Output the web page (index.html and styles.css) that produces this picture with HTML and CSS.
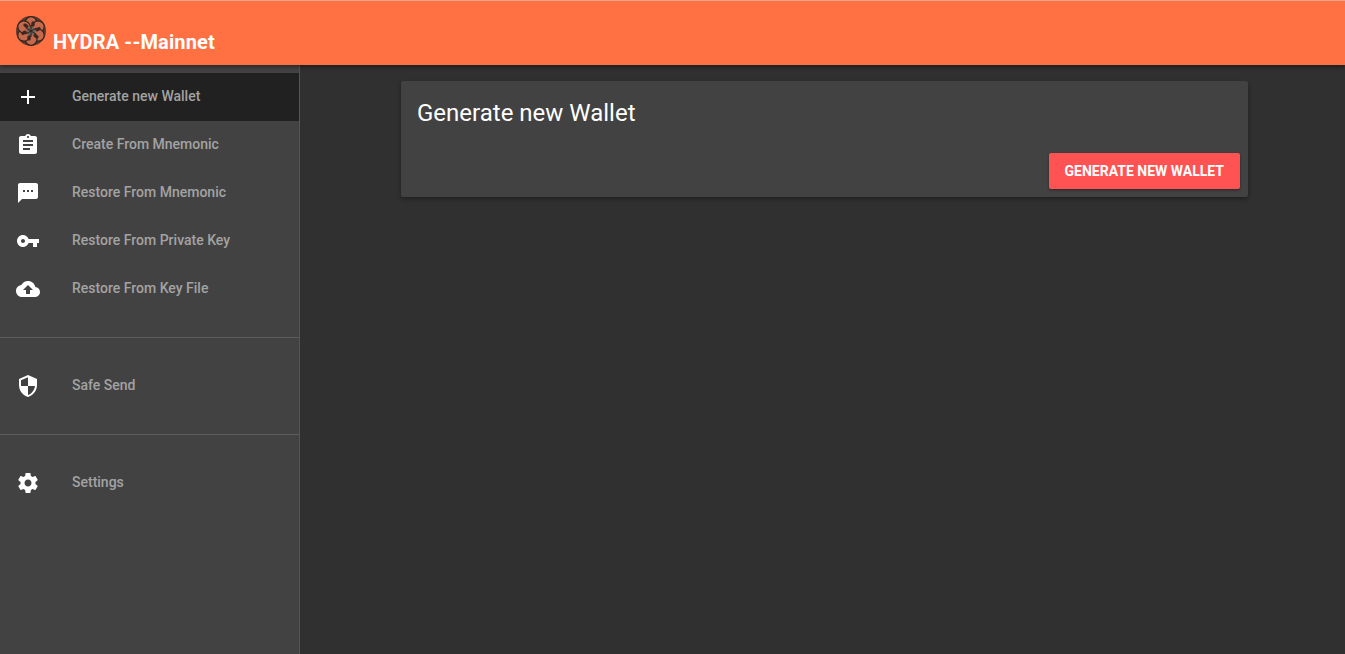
FILE: index.html

```html
<!DOCTYPE html>
<html>
<head>
    <title>HYDRA --Mainnet</title>
    <meta charset="UTF-8">
    <link rel="stylesheet" href="styles.css">
</head>
<body>
    <header class="topbar">
        <svg class="logo" viewBox="0 0 30 30">
            <circle cx="15" cy="15" r="15" fill="#5b3a2e"/>
            <g fill="#c4694c" stroke="#33231e" stroke-width="1.2">
                <ellipse cx="15" cy="7" rx="6" ry="6.4"/>
                <ellipse cx="15" cy="7" rx="6" ry="6.4" transform="rotate(60 15 15)"/>
                <ellipse cx="15" cy="7" rx="6" ry="6.4" transform="rotate(120 15 15)"/>
                <ellipse cx="15" cy="7" rx="6" ry="6.4" transform="rotate(180 15 15)"/>
                <ellipse cx="15" cy="7" rx="6" ry="6.4" transform="rotate(240 15 15)"/>
                <ellipse cx="15" cy="7" rx="6" ry="6.4" transform="rotate(300 15 15)"/>
            </g>
            <g fill="#3d2620">
                <ellipse cx="17" cy="8" rx="1.8" ry="2.8"/>
                <ellipse cx="17" cy="8" rx="1.8" ry="2.8" transform="rotate(60 15 15)"/>
                <ellipse cx="17" cy="8" rx="1.8" ry="2.8" transform="rotate(120 15 15)"/>
                <ellipse cx="17" cy="8" rx="1.8" ry="2.8" transform="rotate(180 15 15)"/>
                <ellipse cx="17" cy="8" rx="1.8" ry="2.8" transform="rotate(240 15 15)"/>
                <ellipse cx="17" cy="8" rx="1.8" ry="2.8" transform="rotate(300 15 15)"/>
            </g>
            <circle cx="15" cy="15" r="4.5" fill="#6f6259"/>
            <path d="M15 9v12M9.8 12l10.4 6M9.8 18l10.4-6" stroke="#33231e" stroke-width="1"/>
        </svg>
        <span class="brand">HYDRA --Mainnet</span>
    </header>

    <div class="layout">
        <nav class="sidebar">
            <ul class="menu">
                <li class="menu-item active">
                    <svg class="icon" viewBox="0 0 24 24"><path d="M19 13h-6v6h-2v-6H5v-2h6V5h2v6h6v2z"/></svg>
                    <span>Generate new Wallet</span>
                </li>
                <li class="menu-item">
                    <svg class="icon" viewBox="0 0 24 24"><path d="M19 3h-4.18C14.4 1.84 13.3 1 12 1c-1.3 0-2.4.84-2.82 2H5c-1.1 0-2 .9-2 2v14c0 1.1.9 2 2 2h14c1.1 0 2-.9 2-2V5c0-1.1-.9-2-2-2zm-7 0c.55 0 1 .45 1 1s-.45 1-1 1-1-.45-1-1 .45-1 1-1zm2 14H7v-2h7v2zm3-4H7v-2h10v2zm0-4H7V7h10v2z"/></svg>
                    <span>Create From Mnemonic</span>
                </li>
                <li class="menu-item">
                    <svg class="icon" viewBox="0 0 24 24"><path d="M20 2H4c-1.1 0-1.99.9-1.99 2L2 22l4-4h14c1.1 0 2-.9 2-2V4c0-1.1-.9-2-2-2zM9 11H7V9h2v2zm4 0h-2V9h2v2zm4 0h-2V9h2v2z"/></svg>
                    <span>Restore From Mnemonic</span>
                </li>
                <li class="menu-item">
                    <svg class="icon" viewBox="0 0 24 24"><path d="M12.65 10C11.83 7.67 9.61 6 7 6c-3.31 0-6 2.69-6 6s2.69 6 6 6c2.61 0 4.83-1.67 5.65-4H17v4h4v-4h2v-4H12.65zM7 14c-1.1 0-2-.9-2-2s.9-2 2-2 2 .9 2 2-.9 2-2 2z"/></svg>
                    <span>Restore From Private Key</span>
                </li>
                <li class="menu-item">
                    <svg class="icon" viewBox="0 0 24 24"><path d="M19.35 10.04C18.67 6.59 15.64 4 12 4 9.11 4 6.6 5.64 5.35 8.04 2.34 8.36 0 10.91 0 14c0 3.31 2.69 6 6 6h13c2.76 0 5-2.24 5-5 0-2.64-2.05-4.78-4.65-4.96zM14 13v4h-4v-4H7l5-5 5 5h-3z"/></svg>
                    <span>Restore From Key File</span>
                </li>
            </ul>
            <hr class="divider">
            <ul class="menu">
                <li class="menu-item">
                    <svg class="icon" viewBox="0 0 24 24"><path d="M12 1L3 5v6c0 5.55 3.84 10.74 9 12 5.16-1.26 9-6.45 9-12V5l-9-4zm0 10.99h7c-.53 4.12-3.28 7.79-7 8.94V12H5V6.3l7-3.11v8.8z"/></svg>
                    <span>Safe Send</span>
                </li>
            </ul>
            <hr class="divider">
            <ul class="menu">
                <li class="menu-item">
                    <svg class="icon" viewBox="0 0 24 24"><path d="M19.43 12.98c.04-.32.07-.64.07-.98s-.03-.66-.07-.98l2.11-1.65c.19-.15.24-.42.12-.64l-2-3.46c-.12-.22-.39-.3-.61-.22l-2.49 1c-.52-.4-1.08-.73-1.69-.98l-.38-2.65C14.46 2.18 14.25 2 14 2h-4c-.25 0-.46.18-.49.42l-.38 2.65c-.61.25-1.17.59-1.69.98l-2.49-1c-.23-.09-.49 0-.61.22l-2 3.46c-.13.22-.07.49.12.64l2.11 1.65c-.04.32-.07.65-.07.98s.03.66.07.98l-2.11 1.65c-.19.15-.24.42-.12.64l2 3.46c.12.22.39.3.61.22l2.49-1c.52.4 1.08.73 1.69.98l.38 2.65c.03.24.24.42.49.42h4c.25 0 .46-.18.49-.42l.38-2.65c.61-.25 1.17-.59 1.69-.98l2.49 1c.23.09.49 0 .61-.22l2-3.46c.12-.22.07-.49-.12-.64l-2.11-1.65zM12 15.5c-1.93 0-3.5-1.57-3.5-3.5s1.57-3.5 3.5-3.5 3.5 1.57 3.5 3.5-1.57 3.5-3.5 3.5z"/></svg>
                    <span>Settings</span>
                </li>
            </ul>
        </nav>

        <main class="content">
            <section class="card">
                <h2 class="card-title">Generate new Wallet</h2>
                <div class="card-actions">
                    <button class="primary-btn" type="button">Generate new Wallet</button>
                </div>
            </section>
        </main>
    </div>
</body>
</html>
```

FILE: styles.css

```css
html, body {
    height: 100%;
}
body {
    margin: 0;
    overflow: hidden;
    font-family: Roboto, sans-serif;
    background-color: #303030;
    color: #fff;
}
.topbar {
    position: relative;
    z-index: 2;
    display: flex;
    align-items: flex-start;
    box-sizing: border-box;
    height: 65px;
    padding: 16px 16px 0;
    background-color: #ff7043;
    border-top: 1px solid #f0a78c;
    box-shadow: 0 2px 4px rgba(0, 0, 0, 0.4);
}
.logo {
    width: 30px;
    height: 30px;
    margin-top: -1px;
    flex-shrink: 0;
}
.brand {
    margin: 13px 0 0 7px;
    font-size: 20px;
    font-weight: 700;
    line-height: 24px;
    letter-spacing: 0.15px;
    color: #fff;
}
.layout {
    display: flex;
    height: calc(100% - 65px);
}
.sidebar {
    box-sizing: border-box;
    width: 300px;
    flex-shrink: 0;
    padding-top: 8px;
    background-color: #424242;
    border-right: 1px solid #555;
}
.menu {
    list-style: none;
    margin: 0;
    padding: 0;
}
.menu-item {
    display: flex;
    align-items: center;
    height: 48px;
    padding-left: 16px;
    font-size: 14px;
    font-weight: 500;
    color: #a3a3a3;
}
.menu-item span {
    position: relative;
    top: -1px;
}
.menu-item.active {
    background-color: #212121;
}
.icon {
    width: 24px;
    height: 24px;
    margin-right: 32px;
    fill: #fff;
    flex-shrink: 0;
}
.divider {
    height: 1px;
    margin: 24px 0;
    border: none;
    background-color: #5c5c5c;
}
.content {
    flex: 1;
    padding: 16px 97px 0 101px;
}
.card {
    box-sizing: border-box;
    height: 116px;
    padding: 16px 8px 8px 16px;
    background-color: #424242;
    border-radius: 2px;
    box-shadow: 0 2px 4px rgba(0, 0, 0, 0.35);
    display: flex;
    flex-direction: column;
    justify-content: space-between;
}
.card-title {
    margin: 0;
    font-size: 24px;
    font-weight: 400;
    line-height: 32px;
    color: #fff;
}
.card-actions {
    display: flex;
    justify-content: flex-end;
}
.primary-btn {
    height: 36px;
    padding: 0 16px;
    border: none;
    border-radius: 2px;
    background-color: #ff5252;
    color: #fff;
    font-family: Roboto, sans-serif;
    font-size: 14px;
    font-weight: 700;
    text-transform: uppercase;
    box-shadow: 0 1px 3px rgba(0, 0, 0, 0.4);
    cursor: pointer;
}
```
